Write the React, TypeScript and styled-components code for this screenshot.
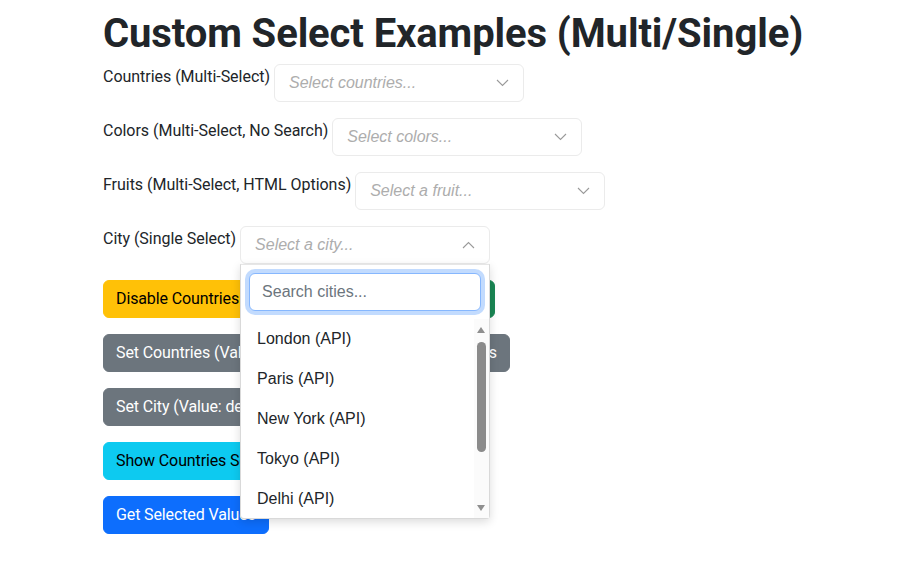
import React from "react";
import styled, { createGlobalStyle, css } from "styled-components";

const GlobalStyle = createGlobalStyle`
  html, body { margin: 0; padding: 0; background: #fff; }
  body {
    font-family: Roboto, "Noto Sans", "Liberation Sans", sans-serif;
    font-size: 16px;
    line-height: 1.5;
    color: #212529;
  }
  * { box-sizing: border-box; }
`;

const Page = styled.div`
  width: 720px;
  margin: 0 auto;
  padding: 10px 0 0 1px;
`;

const Title = styled.h1`
  margin: 0 0 6px;
  font-size: 40px;
  line-height: 1.2;
  font-weight: 700;
  letter-spacing: -0.1px;
  color: #212529;
`;

const FormRow = styled.div`
  display: flex;
  align-items: flex-start;
  gap: 4px;
  margin-bottom: 16px;
`;

const Label = styled.label`
  padding-top: 1px;
  font-size: 16px;
  line-height: 24px;
  letter-spacing: -0.03px;
  white-space: nowrap;
`;

const SelectWrap = styled.div`
  position: relative;
  width: 250px;
`;

const SelectControl = styled.div`
  height: 38px;
  display: flex;
  align-items: center;
  justify-content: space-between;
  padding: 0 14px;
  border: 1px solid #ebebeb;
  border-radius: 6px;
  background: #fff;
`;

const Placeholder = styled.span`
  font-family: "Liberation Sans", Arial, sans-serif;
  font-style: italic;
  font-size: 16px;
  color: #adadad;
`;

const Chevron = ({ up }: { up?: boolean }) => (
  <svg width="13" height="8" viewBox="0 0 13 8" fill="none">
    <polyline
      points={up ? "1,7 6.5,1.5 12,7" : "1,1 6.5,6.5 12,1"}
      stroke="#9a9a9a"
      strokeWidth="1.1"
    />
  </svg>
);

const Dropdown = styled.div`
  position: absolute;
  top: 100%;
  left: 0;
  width: 250px;
  z-index: 10;
  background: #fff;
  border: 1px solid #d9d9d9;
  border-top-color: #e6e6e6;
  border-radius: 0 0 4px 4px;
  box-shadow: 0 3px 10px rgba(0, 0, 0, 0.14);
`;

const SearchBox = styled.div`
  padding: 8px;
`;

const SearchInput = styled.input`
  display: block;
  width: 100%;
  height: 38px;
  padding: 6px 12px;
  font-family: "Liberation Sans", Arial, sans-serif;
  font-size: 16px;
  color: #212529;
  border: 1px solid #86b7fe;
  border-radius: 6px;
  outline: none;
  box-shadow: 0 0 0 4px rgba(13, 110, 253, 0.25);
  &::placeholder { color: #6c757d; }
`;

const ListViewport = styled.div`
  position: relative;
  max-height: 199px;
  overflow: hidden;
`;

const OptionList = styled.ul`
  list-style: none;
  margin: 0;
  padding: 0;
`;

const OptionItem = styled.li`
  padding: 8px 16px;
  font-family: "Liberation Sans", Arial, sans-serif;
  font-size: 16px;
  line-height: 24px;
  color: #212529;
`;

const ScrollTrack = styled.div`
  position: absolute;
  top: 0;
  right: 0;
  bottom: 0;
  width: 15px;
  background: #fbfbfb;
`;

const ScrollArrow = styled.div<{ $down?: boolean }>`
  position: absolute;
  left: 3px;
  width: 0;
  height: 0;
  border-left: 4.5px solid transparent;
  border-right: 4.5px solid transparent;
  ${(p) =>
    p.$down
      ? css`bottom: 7px; border-top: 6px solid #8f8f8f;`
      : css`top: 8px; border-bottom: 6px solid #8f8f8f;`}
`;

const ScrollThumb = styled.div`
  position: absolute;
  left: 3px;
  top: 23px;
  width: 9px;
  height: 110px;
  border-radius: 5px;
  background: #8b8b8b;
`;

type Variant = "warning" | "success" | "secondary" | "info" | "primary";

const variants: Record<Variant, ReturnType<typeof css>> = {
  warning: css`background: #ffc107; border-color: #ffc107; color: #000;`,
  success: css`background: #198754; border-color: #198754; color: #fff;`,
  secondary: css`background: #6c757d; border-color: #6c757d; color: #fff;`,
  info: css`background: #0dcaf0; border-color: #0dcaf0; color: #000;`,
  primary: css`background: #0d6efd; border-color: #0d6efd; color: #fff;`,
};

const ButtonRow = styled.div`
  display: flex;
  gap: 4px;
  margin-bottom: 16px;
`;

const Btn = styled.button<{ $variant: Variant }>`
  height: 38px;
  padding: 6px 12px;
  font-family: inherit;
  font-size: 16px;
  line-height: 24px;
  letter-spacing: -0.12px;
  border: 1px solid transparent;
  border-radius: 6px;
  white-space: nowrap;
  cursor: pointer;
  ${(p) => variants[p.$variant]}
`;

const cities = [
  "London (API)",
  "Paris (API)",
  "New York (API)",
  "Tokyo (API)",
  "Delhi (API)",
  "Sydney (API)",
  "Berlin (API)",
  "Moscow (API)",
];

export default function App() {
  return (
    <Page>
      <GlobalStyle />
      <Title>Custom Select Examples (Multi/Single)</Title>

      <FormRow>
        <Label>Countries (Multi-Select)</Label>
        <SelectWrap>
          <SelectControl>
            <Placeholder>Select countries...</Placeholder>
            <Chevron />
          </SelectControl>
        </SelectWrap>
      </FormRow>

      <FormRow>
        <Label>Colors (Multi-Select, No Search)</Label>
        <SelectWrap>
          <SelectControl>
            <Placeholder>Select colors...</Placeholder>
            <Chevron />
          </SelectControl>
        </SelectWrap>
      </FormRow>

      <FormRow>
        <Label>Fruits (Multi-Select, HTML Options)</Label>
        <SelectWrap>
          <SelectControl>
            <Placeholder>Select a fruit...</Placeholder>
            <Chevron />
          </SelectControl>
        </SelectWrap>
      </FormRow>

      <FormRow>
        <Label>City (Single Select)</Label>
        <SelectWrap>
          <SelectControl>
            <Placeholder>Select a city...</Placeholder>
            <Chevron up />
          </SelectControl>
          <Dropdown>
            <SearchBox>
              <SearchInput placeholder="Search cities..." autoFocus />
            </SearchBox>
            <ListViewport>
              <OptionList>
                {cities.map((c) => (
                  <OptionItem key={c}>{c}</OptionItem>
                ))}
              </OptionList>
              <ScrollTrack>
                <ScrollArrow />
                <ScrollThumb />
                <ScrollArrow $down />
              </ScrollTrack>
            </ListViewport>
          </Dropdown>
        </SelectWrap>
      </FormRow>

      <ButtonRow>
        <Btn $variant="warning">Disable Countries Select</Btn>
        <Btn $variant="success">Enable Countries Select</Btn>
      </ButtonRow>
      <ButtonRow>
        <Btn $variant="secondary">Set Countries (Values: us, ca)</Btn>
        <Btn $variant="secondary">Get Countries Values</Btn>
      </ButtonRow>
      <ButtonRow>
        <Btn $variant="secondary">Set City (Value: delhi)</Btn>
      </ButtonRow>
      <ButtonRow>
        <Btn $variant="info">Show Countries Select</Btn>
      </ButtonRow>
      <ButtonRow>
        <Btn $variant="primary">Get Selected Values</Btn>
      </ButtonRow>
    </Page>
  );
}
